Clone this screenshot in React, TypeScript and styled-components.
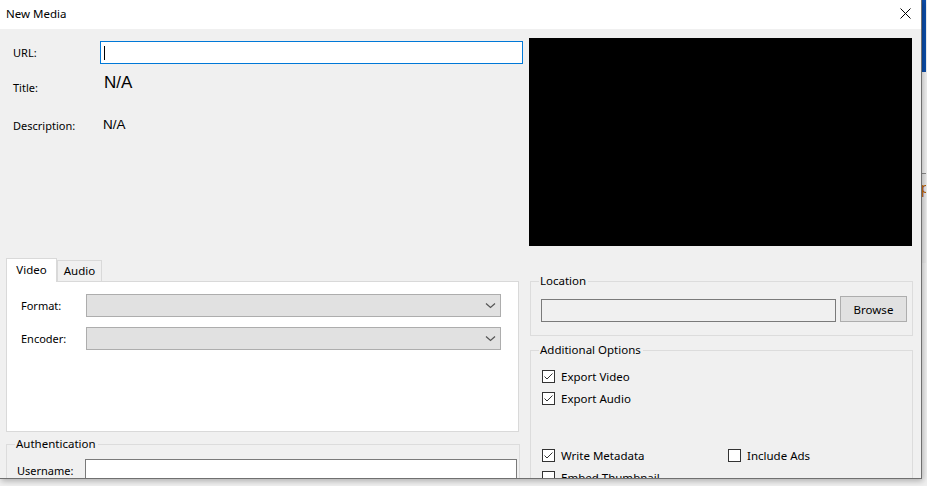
import React from "react";
import styled, { createGlobalStyle } from "styled-components";

const GlobalStyle = createGlobalStyle`
  html, body {
    margin: 0;
    padding: 0;
    background: #f0f0f0;
  }
  body {
    font-family: "Noto Sans", "Liberation Sans", sans-serif;
    font-size: 11px;
    color: #000;
  }
  * {
    box-sizing: border-box;
  }
`;

const Desktop = styled.div`
  width: 927px;
  height: 486px;
  display: flex;
  overflow: hidden;
  background: #f0f0f0;
`;

const Window = styled.div`
  width: 922px;
  height: 479px;
  flex: none;
  display: flex;
  flex-direction: column;
  background: #f0f0f0;
  border-right: 1px solid #707070;
  border-bottom: 1px solid #707070;
  box-shadow: 1px 2px 6px rgba(0, 0, 0, 0.28);
  overflow: hidden;
  position: relative;
  z-index: 1;
`;

const TitleBar = styled.div`
  height: 29px;
  flex: none;
  background: #fff;
  display: flex;
  align-items: center;
  justify-content: space-between;
  padding: 0 10px 2px 6px;
  font-size: 11.5px;
`;

const Body = styled.div`
  flex: 1;
  display: flex;
  min-height: 0;
`;

const LeftColumn = styled.div`
  width: 529px;
  flex: none;
  padding-left: 6px;
  display: flex;
  flex-direction: column;
`;

const RightColumn = styled.div`
  width: 384px;
  flex: none;
  padding-top: 9px;
  display: flex;
  flex-direction: column;
`;

const InfoPanel = styled.div`
  height: 229px;
  flex: none;
  padding: 12px 0 0 7px;
  display: flex;
  flex-direction: column;
`;

const InfoRow = styled.div<{ $height: number; $gap: number }>`
  height: ${(p) => p.$height}px;
  margin-top: ${(p) => p.$gap}px;
  display: grid;
  grid-template-columns: 87px 423px;
  align-items: center;
`;

const InfoLabel = styled.span`
  line-height: 16px;
`;

const InfoValue = styled.span<{ $size: number; $start?: boolean }>`
  font-family: "Liberation Sans", Arial, sans-serif;
  font-size: ${(p) => p.$size}px;
  line-height: ${(p) => p.$size + 4}px;
  padding-left: ${(p) => (p.$start ? 4 : 3)}px;
  align-self: ${(p) => (p.$start ? "start" : "center")};
  margin-bottom: ${(p) => (p.$start ? 0 : 3)}px;
`;

const FocusedBox = styled.div`
  height: 23px;
  background: #fff;
  border: 1px solid #0078d7;
  display: flex;
  align-items: center;
  padding-left: 3px;
`;

const Caret = styled.span`
  width: 1px;
  height: 14px;
  background: #000;
`;

const TabStrip = styled.div`
  display: flex;
  align-items: flex-end;
  height: 23px;
  flex: none;
`;

const Tab = styled.div<{ $active?: boolean; $width: number }>`
  width: ${(p) => p.$width}px;
  height: ${(p) => (p.$active ? 24 : 21)}px;
  display: flex;
  align-items: center;
  justify-content: center;
  padding-bottom: ${(p) => (p.$active ? 1 : 0)}px;
  background: ${(p) => (p.$active ? "#fff" : "#f0f0f0")};
  border: 1px solid #d9d9d9;
  border-bottom: none;
  margin-bottom: ${(p) => (p.$active ? -1 : 0)}px;
  position: relative;
  z-index: ${(p) => (p.$active ? 1 : 0)};
  line-height: 14px;
  font-size: 11.5px;
`;

const TabPanel = styled.div`
  width: 513px;
  height: 151px;
  flex: none;
  background: #fff;
  border: 1px solid #d9d9d9;
  padding: 12px 0 0 14px;
  display: flex;
  flex-direction: column;
  gap: 10px;
`;

const FieldRow = styled.div<{ $labelWidth: number }>`
  display: grid;
  grid-template-columns: ${(p) => p.$labelWidth}px 1fr;
  align-items: center;
`;

const Combo = styled.div`
  width: 415px;
  height: 23px;
  background: #e1e1e1;
  border: 1px solid #adadad;
  display: flex;
  align-items: center;
  justify-content: flex-end;
  padding-right: 4px;
`;

const GroupBox = styled.fieldset<{ $width: number }>`
  width: ${(p) => p.$width}px;
  margin: 0;
  border: 1px solid #dcdcdc;
  padding: 0 4px 0 10px;
  flex: none;
  min-width: 0;

  legend {
    padding: 0 2px 0 1px;
    margin-left: -2px;
    line-height: 16px;
    font-size: 11.5px;
  }
`;

const TextBox = styled.div<{ $width: number; $readOnly?: boolean }>`
  width: ${(p) => p.$width}px;
  height: 23px;
  flex: none;
  background: ${(p) => (p.$readOnly ? "#f0f0f0" : "#fff")};
  border: 1px solid #7a7a7a;
`;

const Preview = styled.div`
  width: 383px;
  height: 208px;
  flex: none;
  background: #000;
`;

const LocationRow = styled.div`
  display: flex;
  align-items: flex-end;
  gap: 4px;
  padding: 7px 0 13px;
`;

const Button = styled.div`
  width: 67px;
  height: 26px;
  flex: none;
  background: #e1e1e1;
  border: 1px solid #adadad;
  display: flex;
  align-items: center;
  justify-content: center;
  font-size: 11.5px;
`;

const OptionList = styled.div<{ $top: number }>`
  display: grid;
  grid-template-columns: 186px 1fr;
  grid-auto-rows: 22px;
  padding-top: ${(p) => p.$top}px;
  padding-left: 1px;
`;

const CheckLabel = styled.label`
  display: flex;
  align-items: center;
  gap: 6px;
  font-size: 11.5px;
  white-space: nowrap;
`;

const Box = styled.span`
  width: 13px;
  height: 13px;
  flex: none;
  background: #fff;
  border: 1px solid #333;
  display: flex;
`;

const BackStrip = styled.div`
  width: 5px;
  flex: none;
  display: flex;
  flex-direction: column;
  margin-left: -1px;
`;

const Strip = styled.div<{ $h?: number; $bg: string; $line?: boolean }>`
  height: ${(p) => (p.$h ? `${p.$h}px` : "auto")};
  flex: ${(p) => (p.$h ? "none" : 1)};
  background: ${(p) => p.$bg};
  border-top: ${(p) => (p.$line ? "1px solid #8c8c8c" : "none")};
  overflow: hidden;
  font-size: 14px;
  line-height: 20px;
  color: #b55a00;
  padding-top: ${(p) => (p.$line ? 4 : 0)}px;
`;

const Check: React.FC<{ checked?: boolean; label: string }> = ({ checked, label }) => (
  <CheckLabel>
    <Box>
      {checked && (
        <svg width="11" height="11" viewBox="0 0 11 11">
          <polyline points="1.5,5.5 4,8 9.5,2.5" fill="none" stroke="#333" strokeWidth="1" />
        </svg>
      )}
    </Box>
    {label}
  </CheckLabel>
);

const Chevron = () => (
  <svg width="11" height="7" viewBox="0 0 11 7">
    <polyline points="1,1.5 5.5,5.5 10,1.5" fill="none" stroke="#555" strokeWidth="1.2" />
  </svg>
);

const CloseIcon = () => (
  <svg width="11" height="11" viewBox="0 0 11 11">
    <path d="M0.5 0.5 L10.5 10.5 M10.5 0.5 L0.5 10.5" stroke="#000" strokeWidth="1" />
  </svg>
);

const App: React.FC = () => {
  return (
    <>
      <GlobalStyle />
      <Desktop>
        <Window>
          <TitleBar>
            New Media
            <CloseIcon />
          </TitleBar>
          <Body>
            <LeftColumn>
              <InfoPanel>
                <InfoRow $height={23} $gap={0}>
                  <InfoLabel>URL:</InfoLabel>
                  <FocusedBox>
                    <Caret />
                  </FocusedBox>
                </InfoRow>
                <InfoRow $height={32} $gap={8}>
                  <InfoLabel>Title:</InfoLabel>
                  <InfoValue $size={17} $start>
                    N/A
                  </InfoValue>
                </InfoRow>
                <InfoRow $height={32} $gap={6}>
                  <InfoLabel>Description:</InfoLabel>
                  <InfoValue $size={13.5}>N/A</InfoValue>
                </InfoRow>
              </InfoPanel>

              <TabStrip>
                <Tab $active $width={51}>
                  Video
                </Tab>
                <Tab $width={45}>Audio</Tab>
              </TabStrip>
              <TabPanel>
                <FieldRow $labelWidth={65}>
                  <span>Format:</span>
                  <Combo>
                    <Chevron />
                  </Combo>
                </FieldRow>
                <FieldRow $labelWidth={65}>
                  <span>Encoder:</span>
                  <Combo>
                    <Chevron />
                  </Combo>
                </FieldRow>
              </TabPanel>

              <GroupBox $width={514} style={{ marginTop: 4 }}>
                <legend>Authentication</legend>
                <FieldRow $labelWidth={68} style={{ paddingTop: 7 }}>
                  <span>Username:</span>
                  <TextBox $width={432} />
                </FieldRow>
              </GroupBox>
            </LeftColumn>

            <RightColumn>
              <Preview />
              <GroupBox $width={383} style={{ marginTop: 27, marginLeft: 1 }}>
                <legend>Location</legend>
                <LocationRow>
                  <TextBox $width={295} $readOnly />
                  <Button>Browse</Button>
                </LocationRow>
              </GroupBox>
              <GroupBox $width={383} style={{ marginTop: 6, marginLeft: 1, height: 200 }}>
                <legend>Additional Options</legend>
                <OptionList $top={7}>
                  <Check checked label="Export Video" />
                  <span />
                  <Check checked label="Export Audio" />
                  <span />
                </OptionList>
                <OptionList $top={35}>
                  <Check checked label="Write Metadata" />
                  <Check label="Include Ads" />
                  <Check label="Embed Thumbnail" />
                  <span />
                </OptionList>
              </GroupBox>
            </RightColumn>
          </Body>
        </Window>
        <BackStrip>
          <Strip $h={72} $bg="#0c4da9" />
          <Strip $h={101} $bg="#f2f2f2" />
          <Strip $h={90} $bg="#e9e9e9" $line>
            p
          </Strip>
          <Strip $bg="#f0f0f0" />
        </BackStrip>
      </Desktop>
    </>
  );
};

export default App;
